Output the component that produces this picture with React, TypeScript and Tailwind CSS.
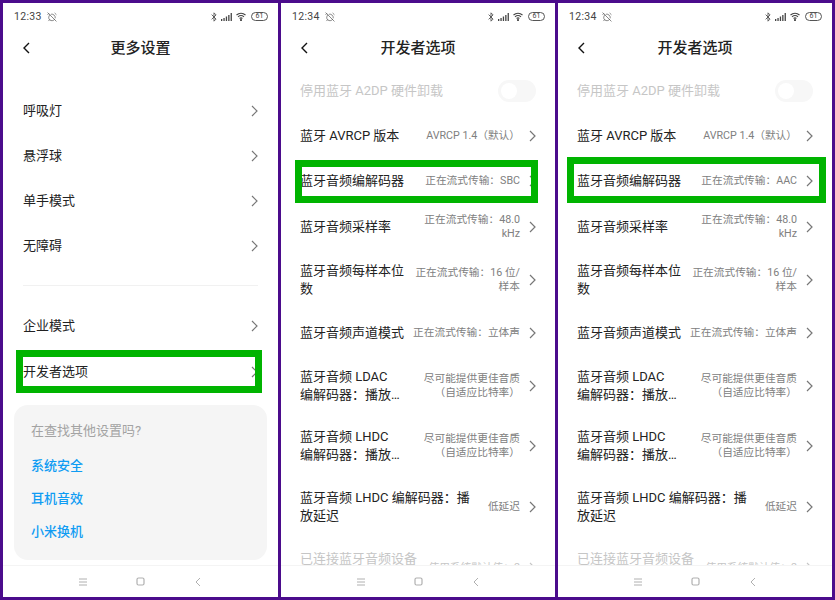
import React from 'react';
import { AlarmClockOff, Bluetooth } from 'lucide-react';

interface IRow {
  title: string[];
  value?: string[];
  height: string;
  disabled?: boolean;
  toggle?: boolean;
}

const Chevron: React.FC<{ className?: string }> = ({ className = 'text-[#777]' }) => (
  <svg width="7" height="12" viewBox="0 0 7 12" fill="none" className={`shrink-0 ${className}`}>
    <path d="M1 1l5 5-5 5" stroke="currentColor" strokeWidth="1.2" />
  </svg>
);

const StatusBar: React.FC<{ time: string }> = ({ time }) => (
  <div className="flex h-[27px] shrink-0 items-center pl-[11px] pr-[10px] text-[#444]">
    <span className="text-[10.5px] tracking-[0.3px]">{time}</span>
    <AlarmClockOff size={10} strokeWidth={1.5} className="ml-[5px]" />
    <div className="ml-auto flex items-center">
      <Bluetooth size={10} strokeWidth={2} />
      <svg width="11" height="8" viewBox="0 0 11 8" className="ml-[2px]" fill="currentColor">
        <rect x="0" y="6" width="1.3" height="2" />
        <rect x="2.4" y="5" width="1.3" height="3" />
        <rect x="4.8" y="3.5" width="1.3" height="4.5" />
        <rect x="7.2" y="2" width="1.3" height="6" />
        <rect x="9.6" y="0" width="1.3" height="8" />
      </svg>
      <svg width="11" height="9" viewBox="0 0 11 9" className="ml-[4px]" fill="none" stroke="currentColor" strokeWidth="1.1">
        <path d="M.5 3a7 7 0 0 1 9 0M2 4.8a4.6 4.6 0 0 1 6 0M3.6 6.5a2.2 2.2 0 0 1 2.8 0" />
        <circle cx="5" cy="8" r=".5" fill="currentColor" />
      </svg>
      <div className="ml-[4px] flex h-[9px] w-[17px] items-center justify-center rounded-full border border-[#555] text-[7px] leading-none">
        61
      </div>
    </div>
  </div>
);

const Header: React.FC<{ title: string }> = ({ title }) => (
  <div className="flex h-[36px] shrink-0 items-center px-[20px]">
    <svg width="7" height="12" viewBox="0 0 7 12" fill="none" className="shrink-0 text-[#111]">
      <path d="M6 1L1 6l5 5" stroke="currentColor" strokeWidth="1.4" />
    </svg>
    <div className="flex-1 text-center text-[15px] font-medium text-[#222]">{title}</div>
    <div className="w-[7px] shrink-0" />
  </div>
);

const NavBar = () => (
  <div className="flex h-[32px] shrink-0 items-center border-t border-[#f4f4f4] bg-white pl-[75px] text-[#b0b0b0]">
    <svg width="10" height="8" viewBox="0 0 10 8" stroke="currentColor" strokeWidth="1">
      <path d="M1 1h8M1 4h8M1 7h8" />
    </svg>
    <svg width="9" height="9" viewBox="0 0 9 9" fill="none" stroke="currentColor" strokeWidth="1.2" className="ml-[48px]">
      <rect x="1" y="1" width="7" height="7" rx="1.5" />
    </svg>
    <svg width="6" height="10" viewBox="0 0 6 10" fill="none" stroke="currentColor" strokeWidth="1" className="ml-[50px]">
      <path d="M5 1L1 5l4 4" />
    </svg>
  </div>
);

const Row: React.FC<{ row: IRow }> = ({ row }) => (
  <div className={`flex shrink-0 items-center pl-[19px] pr-[19px] ${row.height}`}>
    <div className={`min-w-0 flex-1 text-[13px] leading-[18px] ${row.disabled ? 'text-[#c6c6c6]' : 'text-[#222]'}`}>
      {row.title.map((line) => (
        <div key={line} className="whitespace-nowrap">{line}</div>
      ))}
    </div>
    {row.value && (
      <div className={`mr-[9px] shrink-0 text-right text-[10.7px] leading-[14px] ${row.disabled ? 'text-[#c6c6c6]' : 'text-[#808080]'}`}>
        {row.value.map((line) => (
          <div key={line} className="whitespace-nowrap">{line}</div>
        ))}
      </div>
    )}
    {row.toggle ? (
      <div className="flex h-[22px] w-[38px] items-center rounded-full bg-[#f7f7f7] pl-[3px]">
        <div className="h-[16px] w-[16px] rounded-full bg-white" />
      </div>
    ) : (
      <Chevron className={row.disabled ? 'text-[#c6c6c6]' : 'text-[#777]'} />
    )}
  </div>
);

const developerRows = (codec: string): IRow[] => [
  { title: ['停用蓝牙 A2DP 硬件卸载'], height: 'h-[46px]', disabled: true, toggle: true },
  { title: ['蓝牙 AVRCP 版本'], value: ['AVRCP 1.4\uFF08默认\uFF09'], height: 'h-[44px]' },
  { title: ['蓝牙音频编解码器'], value: [`正在流式传输\uFF1A${codec}`], height: 'h-[46px]' },
  { title: ['蓝牙音频采样率'], value: ['正在流式传输\uFF1A48.0', 'kHz'], height: 'h-[46px]' },
  { title: ['蓝牙音频每样本位', '数'], value: ['正在流式传输\uFF1A16 位/', '样本'], height: 'h-[59px]' },
  { title: ['蓝牙音频声道模式'], value: ['正在流式传输\uFF1A立体声'], height: 'h-[48px]' },
  { title: ['蓝牙音频 LDAC', '编解码器\uFF1A播放…'], value: ['尽可能提供更佳音质', '\uFF08自适应比特率\uFF09'], height: 'h-[58px]' },
  { title: ['蓝牙音频 LHDC', '编解码器\uFF1A播放…'], value: ['尽可能提供更佳音质', '\uFF08自适应比特率\uFF09'], height: 'h-[62px]' },
  { title: ['蓝牙音频 LHDC 编解码器\uFF1A播', '放延迟'], value: ['低延迟'], height: 'h-[60px]' },
  { title: ['已连接蓝牙音频设备', '\u00a0'], value: ['使用系统默认值\uFF1A2'], height: 'h-[62px]', disabled: true }
];

const Screen: React.FC<{ time: string; title: string; width: string; children: React.ReactNode }> = ({ time, title, width, children }) => (
  <div className={`flex h-full shrink-0 flex-col overflow-hidden bg-white ${width}`}>
    <StatusBar time={time} />
    <Header title={title} />
    <div className="min-h-0 flex-1 overflow-hidden pt-[2px]">{children}</div>
    <NavBar />
  </div>
);

const settingsTop = ['呼吸灯', '悬浮球', '单手模式', '无障碍'];
const settingsLinks = ['系统安全', '耳机音效', '小米换机'];

const SimpleRow: React.FC<{ label: string }> = ({ label }) => (
  <div className="flex h-[45px] items-center justify-between pl-[20px] pr-[20px] text-[13px] text-[#222]">
    <span>{label}</span>
    <Chevron />
  </div>
);

const App = () => (
  <div
    className="relative flex h-[600px] w-[835px] gap-[3px] overflow-hidden bg-[#4b0c8c] p-[3px]"
    style={{ fontFamily: 'Roboto, "Noto Sans CJK SC", sans-serif' }}
  >
    <Screen time="12:33" title="更多设置" width="w-[275px]">
      <div className="pt-[20px]">
        {settingsTop.map((label) => (
          <SimpleRow key={label} label={label} />
        ))}
      </div>
      <div className="mx-[20px] mt-[17px] h-px bg-[#f1f1f1]" />
      <div className="mt-[17px] flex flex-col gap-px">
        <SimpleRow label="企业模式" />
        <SimpleRow label="开发者选项" />
      </div>
      <div className="mx-[11px] mt-[11px] h-[155px] rounded-[14px] bg-[#f5f5f5] px-[17px] pt-[15px]">
        <div className="text-[13px] leading-[22px] text-[#a3a3a3]">在查找其他设置吗?</div>
        <div className="mt-[13px] flex flex-col gap-[11px]">
          {settingsLinks.map((label) => (
            <div key={label} className="text-[13px] font-medium leading-[22px] text-[#0f9cf3]">{label}</div>
          ))}
        </div>
      </div>
    </Screen>

    <Screen time="12:34" title="开发者选项" width="w-[274px]">
      {developerRows('SBC').map((row) => (
        <Row key={row.title[0] + row.height} row={row} />
      ))}
    </Screen>

    <Screen time="12:34" title="开发者选项" width="w-[274px]">
      {developerRows('AAC').map((row) => (
        <Row key={row.title[0] + row.height} row={row} />
      ))}
    </Screen>

    {/* green highlight boxes */}
    <div className="absolute left-[16px] top-[350px] h-[43px] w-[246px] border-[7px] border-[#00b400]" />
    <div className="absolute left-[295px] top-[160px] h-[43px] w-[243px] border-[7px] border-[#00b400]" />
    <div className="absolute left-[567px] top-[157px] h-[46px] w-[259px] border-[7px] border-[#00b400]" />
  </div>
);

export default App;
